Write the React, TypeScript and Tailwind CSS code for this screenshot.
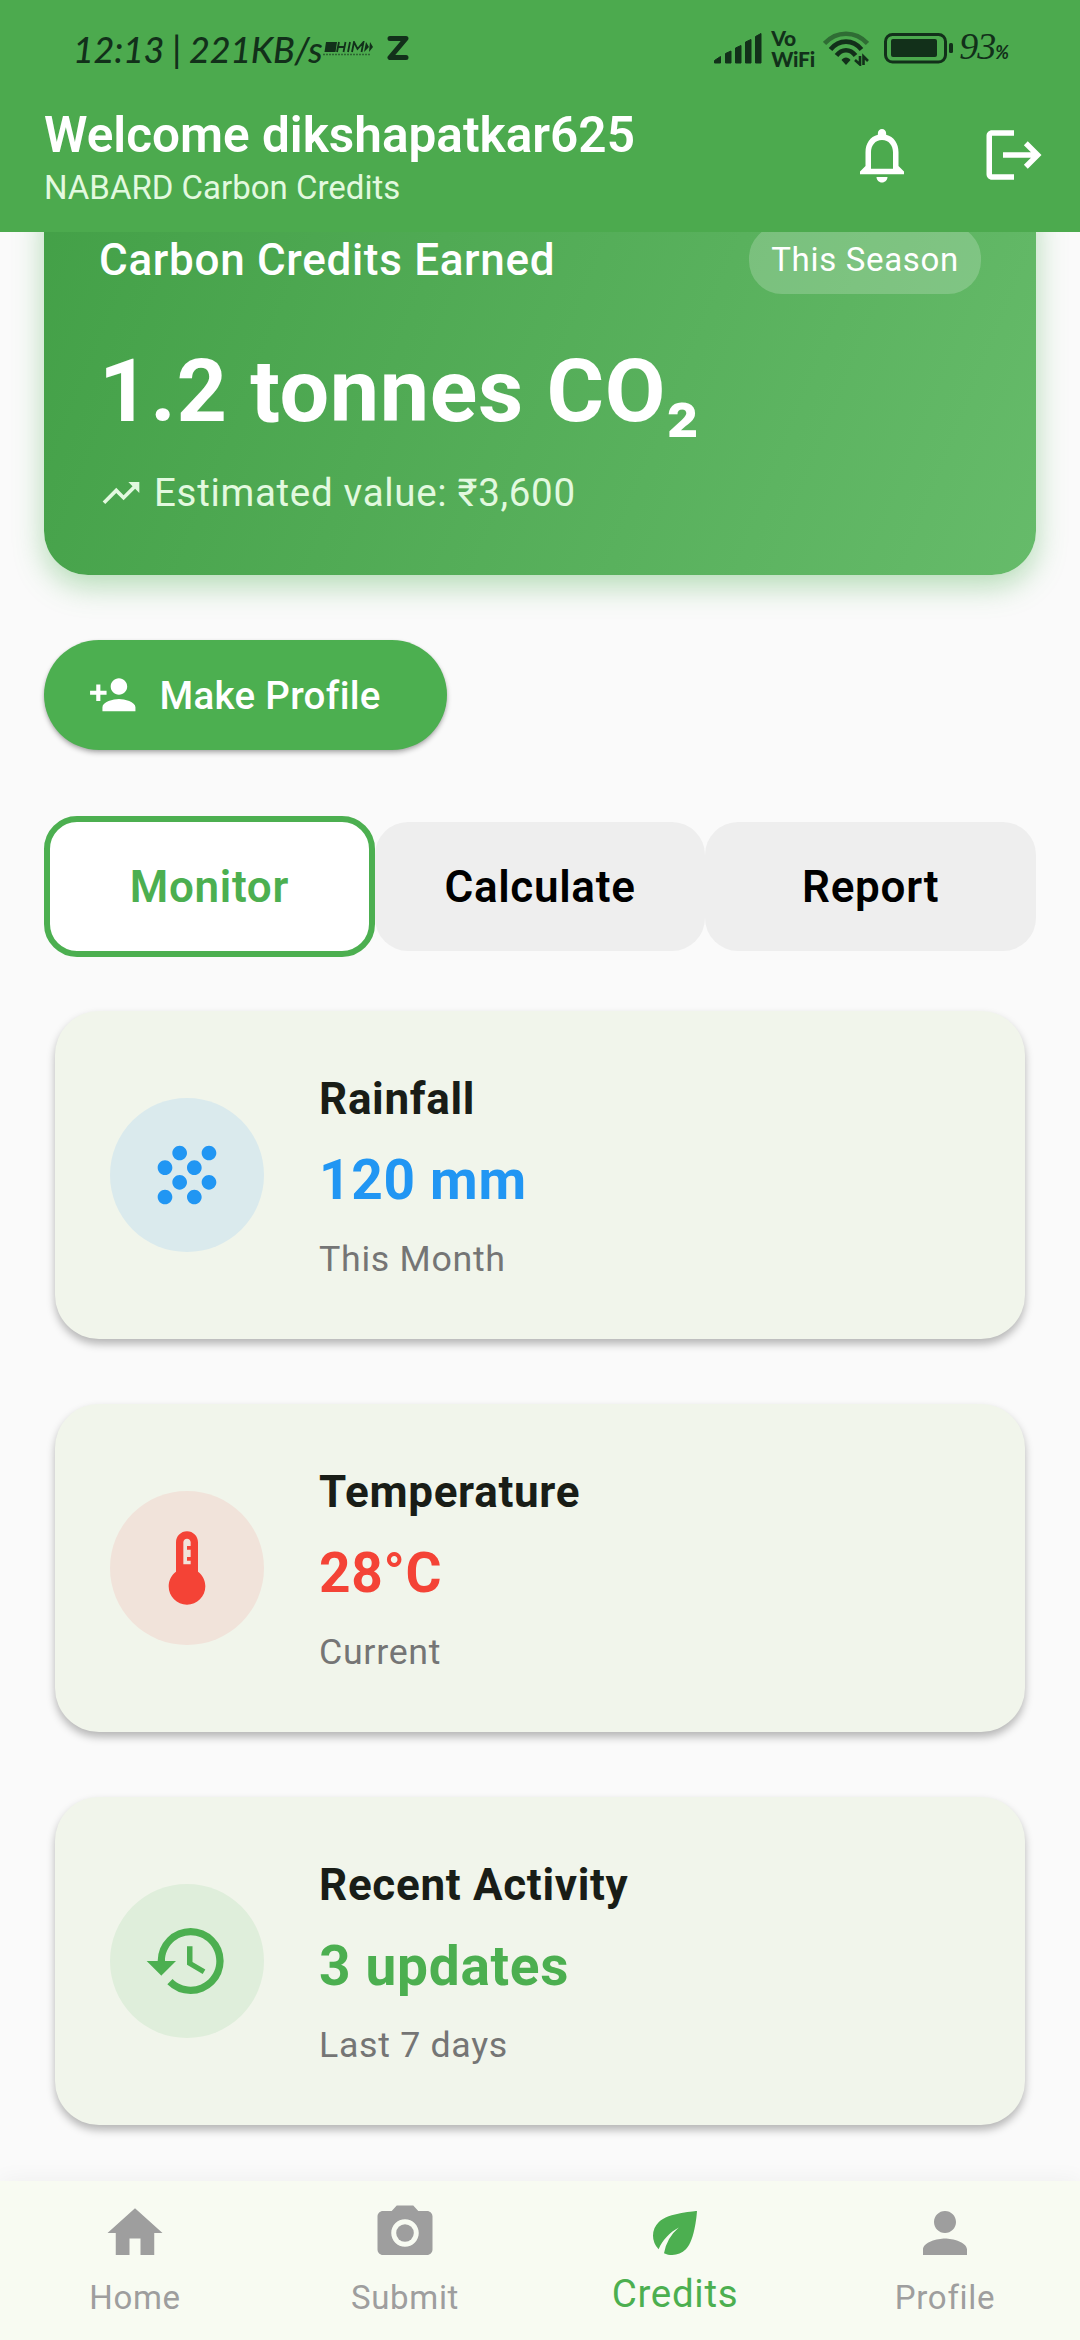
import type { IconType } from "react-icons";
import {
  MdCameraAlt,
  MdEco,
  MdGrain,
  MdHistory,
  MdHome,
  MdLogout,
  MdNotificationsNone,
  MdPerson,
  MdPersonAdd,
  MdThermostat,
  MdTrendingUp,
} from "react-icons/md";

const INK = "#12301a";

function CarrierBadge() {
  return (
    <svg className="ml-[2px] mt-[2px] h-[16px] w-[52px]" viewBox="0 0 52 16" fill={INK}>
      <path d="M3 1h11l-1.5 10H1.5z" />
      <path d="M16 1l-2 10M22.5 1l-2 10M15 6h6.5M27 1l-2 10M29 11l2-10 3.5 7 6-7-2 10" fill="none" stroke={INK} strokeWidth="1.8" />
      <path d="M43 1l3 5-5 5z M47 1l3 5-4 5z" />
      <path d="M0 13.5h48" fill="none" stroke={INK} strokeOpacity=".55" strokeWidth="1.6" strokeDasharray="2 1" />
    </svg>
  );
}

function ZIcon() {
  return (
    <svg className="ml-[12px] h-[26px] w-[22px]" viewBox="0 0 22 26" fill="none" stroke={INK} strokeWidth="5" strokeLinecap="round" strokeLinejoin="round">
      <path d="M3 3.5h16L3 22.5h16" />
    </svg>
  );
}

function Signal() {
  return (
    <svg className="h-[32px] w-[48px]" viewBox="0 0 48 32" fill={INK} stroke={INK} strokeWidth="1" strokeLinejoin="round">
      <path d="M.5 28.5l6-4v6.500h-6z" />
      <path d="M11.500 21.500l5.500-2.500v12h-5.500z" />
      <path d="M21.500 16l5.500-2.500v17.500h-5.500z" />
      <path d="M31.500 10l5.500-2.500v23.500h-5.500z" />
      <path d="M41.500 4.500l5.500-3v29.500h-5.500z" />
    </svg>
  );
}

function Wifi() {
  return (
    <svg className="ml-[9px] h-[36px] w-[46px]" viewBox="0 0 46 36" fill="none" stroke={INK} strokeWidth="4.600">
      <path d="M1.500 13.500C13.500 .5 32.500 .5 44.500 13.500" strokeOpacity=".5" />
      <path d="M7.500 19.500C16 9 30 9 38.500 19.500" />
      <path d="M13.500 25.500C19 18.500 27 18.500 32.500 25.500" />
      <path d="M18.500 30C20.500 26.500 25.500 26.500 27.500 30L23 35z" fill={INK} stroke="none" />
      <path d="M37 26v8.500l-5-4.500M40.500 35v-8.500l4.500 4.500" strokeWidth="2.600" />
    </svg>
  );
}

function Battery() {
  return (
    <svg className="ml-[15px] h-[32px] w-[70px]" viewBox="0 0 70 32">
      <rect x="1.500" y="2.500" width="60" height="27.500" rx="7" fill="none" stroke={INK} strokeWidth="3" />
      <rect x="7" y="7" width="46" height="18" rx="2" fill={INK} />
      <rect x="65" y="11" width="4" height="10" rx="1.500" fill={INK} />
    </svg>
  );
}

function StatusBar() {
  return (
    <div className="flex h-[96px] items-center justify-between pl-[73px] pr-[72px] text-[#12301a]">
      <div className="flex items-center">
        <span className="w-[248px] whitespace-nowrap pt-[2px] font-['Lato'] text-[36px] leading-[44px] font-medium italic tracking-[-0.3px]">
          12:13 | 221KB/s
        </span>
        <CarrierBadge />
        <ZIcon />
      </div>
      <div className="flex items-center">
        <Signal />
        <div className="ml-[9px] flex w-[43px] flex-col whitespace-nowrap font-['Lato'] text-[21px] leading-[21px] font-black tracking-[-0.3px]">
          <span>Vo</span>
          <span>WiFi</span>
        </div>
        <Wifi />
        <Battery />
        <span className="ml-[5px] whitespace-nowrap pt-[2px] font-['Liberation_Serif'] text-[38px] leading-[44px] italic tracking-[-1px]">
          93<span className="font-['Lato'] text-[18px] font-bold">%</span>
        </span>
      </div>
    </div>
  );
}

function Header() {
  return (
    <header className="relative z-10 h-[232px] shrink-0 bg-[#4caa4e]">
      <StatusBar />
      <div className="flex items-center justify-between pl-[44px] pr-[33px]">
        <div className="mt-[10px]">
          <h1 className="text-[49.5px] leading-[58px] font-semibold text-white">Welcome dikshapatkar625</h1>
          <p className="mt-[4px] text-[33px] leading-[39px] text-[#e2f9df]">NABARD Carbon Credits</p>
        </div>
        <div className="mt-[7px] flex items-center gap-[66px] text-white">
          <MdNotificationsNone size={66} />
          <MdLogout size={66} />
        </div>
      </div>
    </header>
  );
}

function CreditCard() {
  return (
    <section className="-mt-[62px] h-[405px] shrink-0 rounded-[44px] bg-[linear-gradient(112deg,#43a047,#66bb6a)] p-[55px] tracking-[0.69px] text-white shadow-[0_11px_30px_rgba(76,175,80,0.4)]">
      <div className="flex h-[69px] items-center justify-between">
        <h2 className="mt-[2px] text-[44px] leading-[63px] font-medium">Carbon Credits Earned</h2>
        <span className="rounded-[33px] bg-white/20 px-[22px] py-[11px] text-[33px] leading-[47px]">This Season</span>
      </div>
      <p className="mt-[34px] text-[88px] leading-[126px] font-bold">1.2 tonnes CO₂</p>
      <div className="mt-[11px] flex items-center gap-[11px] text-[#e2f9df]">
        <MdTrendingUp size={44} />
        <span className="text-[38.5px] leading-[55px]">Estimated value: ₹3,600</span>
      </div>
    </section>
  );
}

function Tabs() {
  return (
    <div className="mt-[66px] grid shrink-0 grid-cols-3 items-center text-[44px] leading-[63px] font-semibold tracking-[0.69px] text-black">
      <button className="h-[141px] rounded-[33px] border-[6px] border-[#4caf50] bg-white pt-[2px] text-[#4caf50]">Monitor</button>
      <button className="h-[129px] rounded-[33px] bg-[#eeeeee] pt-[2px]">Calculate</button>
      <button className="h-[129px] rounded-[33px] bg-[#eeeeee] pt-[2px]">Report</button>
    </div>
  );
}

type Metric = { title: string; value: string; hint: string; icon: IconType; color: string; disc: string };

const metrics: Metric[] = [
  { title: "Rainfall", value: "120 mm", hint: "This Month", icon: MdGrain, color: "text-[#2196f3]", disc: "bg-[#daeaed]" },
  { title: "Temperature", value: "28°C", hint: "Current", icon: MdThermostat, color: "text-[#f44336]", disc: "bg-[#f1e3da]" },
  { title: "Recent Activity", value: "3 updates", hint: "Last 7 days", icon: MdHistory, color: "text-[#4caf50]", disc: "bg-[#dfeedb]" },
];

function MetricCard({ title, value, hint, icon: Icon, color, disc }: Metric) {
  return (
    <article className="mx-[11px] flex h-[328px] items-center rounded-[44px] bg-[#f1f5eb] px-[55px] tracking-[0.69px] shadow-[0_5px_8px_rgba(0,0,0,0.28)]">
      <div className={`flex size-[154px] items-center justify-center rounded-full ${disc} ${color}`}>
        <Icon size={88} />
      </div>
      <div className="ml-[55px]">
        <h3 className="text-[44px] leading-[66px] font-bold text-[#191d17]">{title}</h3>
        <p className={`mt-[9px] text-[55px] leading-[79px] font-bold ${color}`}>{value}</p>
        <p className="mt-[14px] text-[35.75px] leading-[51px] text-[#757575]">{hint}</p>
      </div>
    </article>
  );
}

const navItems: { label: string; icon: IconType; active?: boolean }[] = [
  { label: "Home", icon: MdHome },
  { label: "Submit", icon: MdCameraAlt },
  { label: "Credits", icon: MdEco, active: true },
  { label: "Profile", icon: MdPerson },
];

function BottomNav() {
  return (
    <nav className="relative z-10 grid h-[159px] shrink-0 grid-cols-4 bg-[#f8fbf2] pt-[19px] shadow-[0_0_22px_rgba(0,0,0,0.05)]">
      {navItems.map(({ label, icon: Icon, active }) => (
        <div key={label} className={`flex flex-col items-center tracking-[0.69px] ${active ? "text-[#4caf50]" : "text-[#9e9e9e]"}`}>
          <Icon size={66} />
          <span className={active ? "text-[38.5px] leading-[55px]" : "mt-[8px] text-[33px] leading-[47px]"}>{label}</span>
        </div>
      ))}
    </nav>
  );
}

export default function App() {
  return (
    <div className="flex h-[2340px] w-[1080px] flex-col overflow-hidden bg-[#fafafa] font-['Roboto',sans-serif]">
      <Header />
      <main className="flex min-h-0 flex-1 flex-col px-[44px]">
        <CreditCard />
        <button className="mt-[65px] flex h-[110px] w-[403px] shrink-0 items-center gap-[22px] rounded-full bg-[#4caf50] pl-[44px] text-[38.5px] font-medium tracking-[0.3px] text-white shadow-[0_3px_5px_rgba(0,0,0,0.26),0_1px_3px_rgba(0,0,0,0.1)]">
          <MdPersonAdd size={49.5} />
          <span className="pt-[2px]">Make Profile</span>
        </button>
        <Tabs />
        <div className="mt-[54px] flex flex-col gap-[65px]">
          {metrics.map((m) => (
            <MetricCard key={m.title} {...m} />
          ))}
        </div>
      </main>
      <BottomNav />
    </div>
  );
}
